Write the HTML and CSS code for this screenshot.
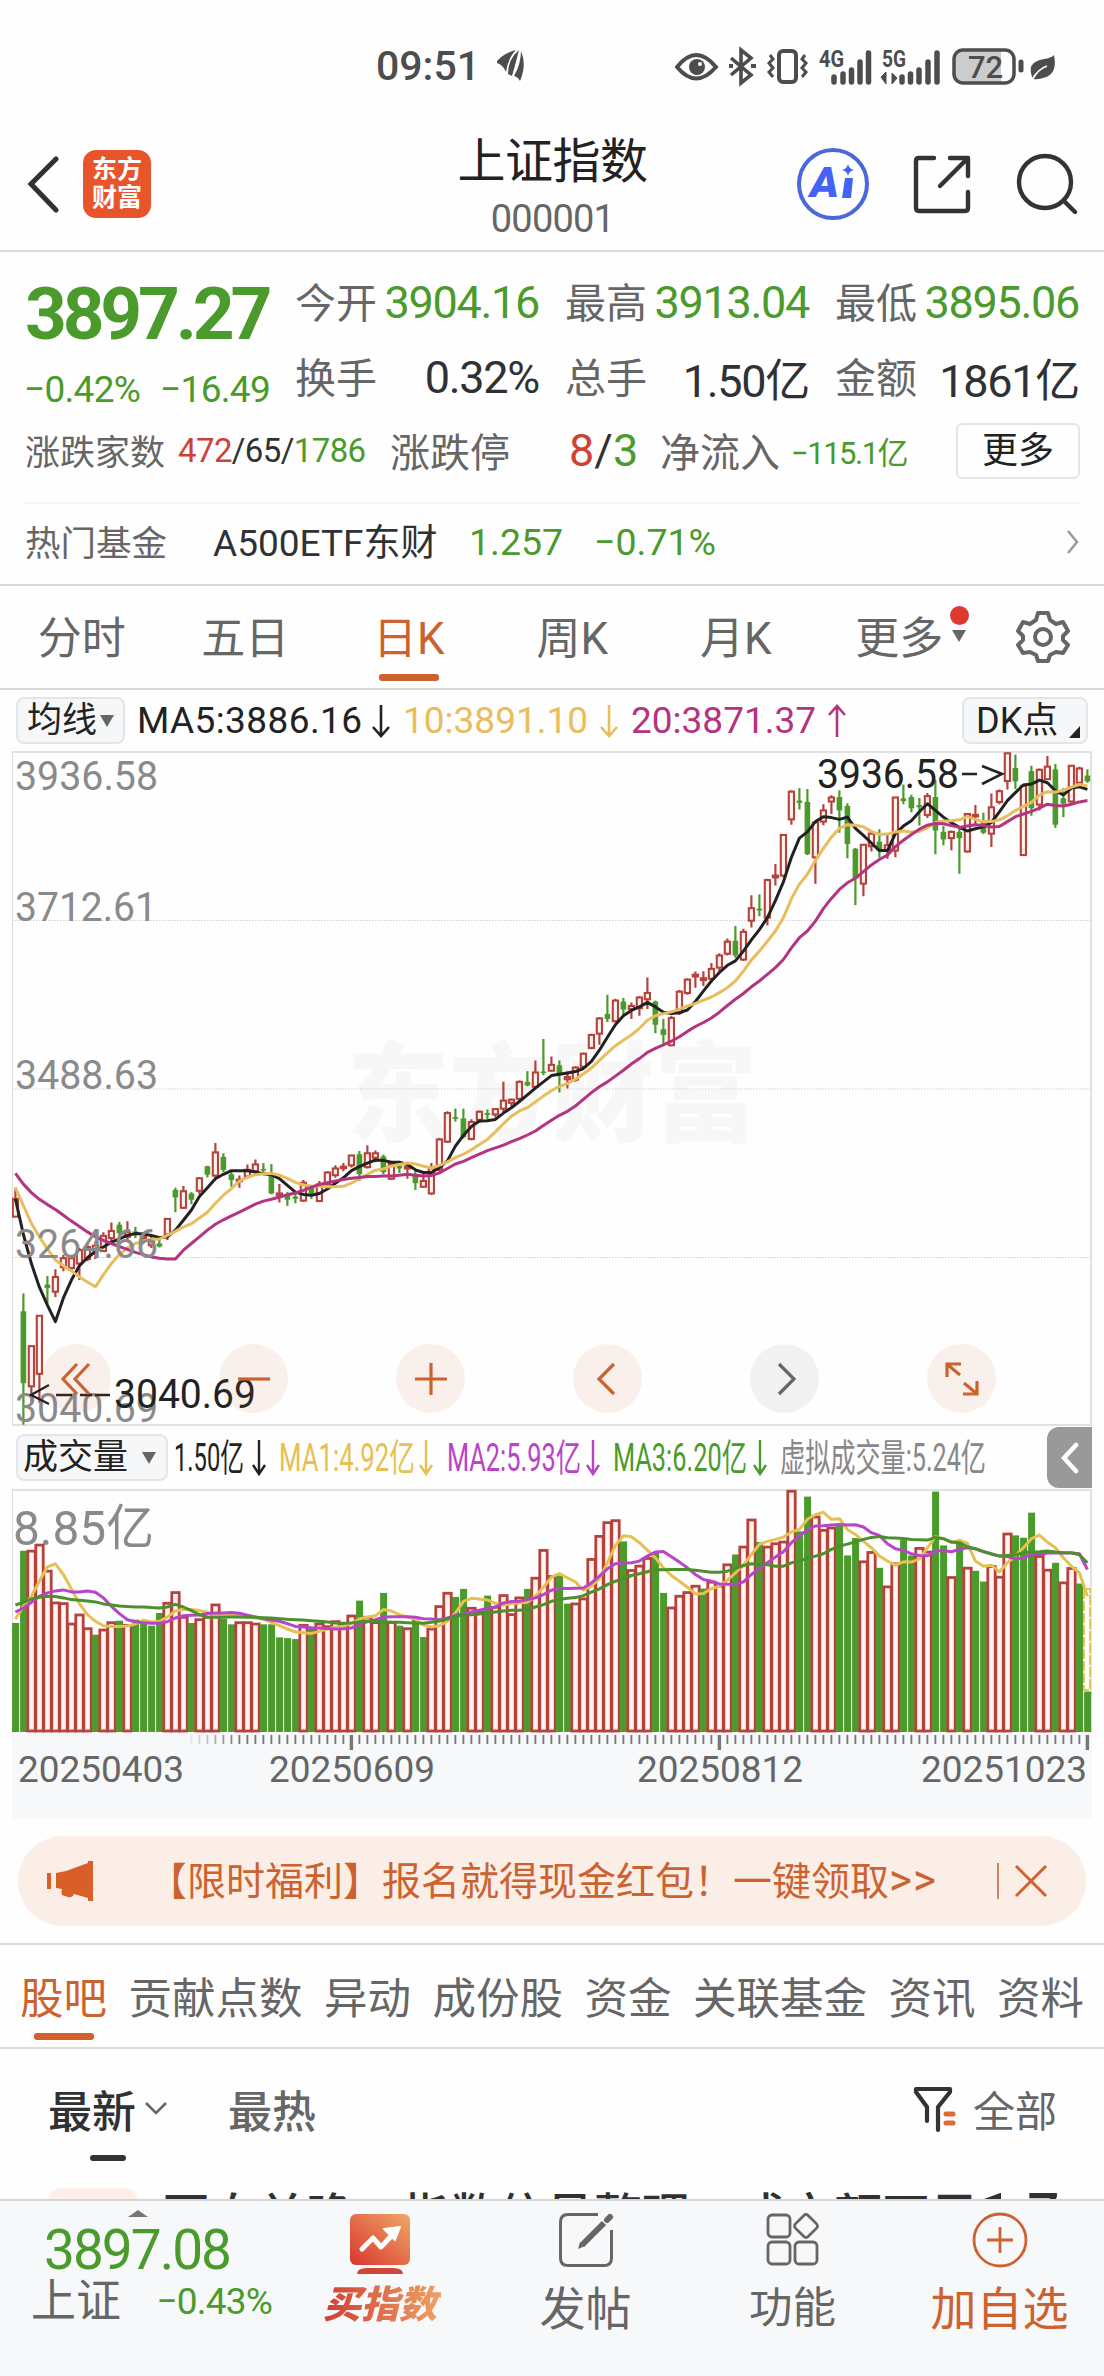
FILE: index.html
```html
<!DOCTYPE html>
<html lang="zh-CN">
<head>
    <meta charset="UTF-8">
    <meta name="viewport" content="width=device-width, initial-scale=1.0">
    <title>上证指数 000001</title>
    <link rel="stylesheet" href="styles.css">
</head>
<body>
<div class="phone">
    <div class="status-bar">
        <span class="clock">09:51</span>
        <svg class="signal-leaf" width="30" height="34" viewBox="0 0 30 34" fill="#4d4d4d">
            <path d="M1 12Q8 4 20 1Q12 9 10 23Q7 16 1 14Z"/>
            <path d="M12 25Q12 10 23 1Q20 13 16 27Z"/>
            <path d="M25 2Q31 16 24 32Q22 28 18 27Q25 15 25 2Z"/>
        </svg>
        <svg class="status-icons" width="390" height="44" viewBox="0 0 390 44" fill="none" stroke="#4d4d4d">
            <path d="M2 23Q21-1 41 23Q21 46 2 23Z" stroke-width="4"/>
            <circle cx="22" cy="23" r="8" fill="#4d4d4d" stroke="none"/>
            <circle cx="25" cy="20" r="2" fill="#fff" stroke="none"/>
            <path d="M56 14L76 31L66 39V6L76 14L56 31" stroke-width="3.6"/>
            <path d="M54 22h4M76 22h5" stroke-width="4"/>
            <rect x="104" y="7" width="17" height="31" rx="4" stroke-width="4"/>
            <path d="M95 11l3 4-4 4 4 5-4 4 4 5M130 11l-3 4 4 4-4 5 4 4-4 5" stroke-width="3"/>
            <text class="net" x="144" y="23" textLength="25" lengthAdjust="spacingAndGlyphs">4G</text>
            <path d="M159 38v-5M168 38v-8M176.500 38V26M185 38V18M193.500 38V9" stroke-width="5.500" stroke-linecap="round"/>
            <text class="net" x="207" y="23" textLength="24" lengthAdjust="spacingAndGlyphs">5G</text>
            <path d="M227 38v-5M235.500 38v-8M244 38V26M253 38V18M262 38V9" stroke-width="5.500" stroke-linecap="round"/>
            <path d="M206 33L211 28V40ZM217 29V40L222 34Z" fill="#4d4d4d" stroke-width="1"/>
            <path d="M287 7h39v31h-39q-7 0-7-7V14q0-7 7-7z" fill="#ccc" stroke="none"/>
            <rect x="279" y="6" width="60" height="33" rx="9" stroke-width="3.500"/>
            <path d="M346 18v8" stroke-width="5" stroke-linecap="round"/>
            <text class="battery" x="293" y="34">72</text>
            <path d="M358 35Q350 18 369 15Q376 14 379 11Q383 31 368 34Q362 36 358 35Z" fill="#4d4d4d" stroke="none"/>
            <path d="M357 36Q363 25 372 22" stroke="#fff" stroke-width="1.800"/>
        </svg>
    </div>

    <header class="header">
        <div class="header-left">
            <svg width="34" height="58" viewBox="0 0 34 58" fill="none" stroke="#2f3133" stroke-width="5" stroke-linecap="round"><path d="M30 4L5 29L30 55"/></svg>
            <div class="logo">东方<br>财富</div>
        </div>
        <div class="header-title">
            <h1>上证指数</h1>
            <p>000001</p>
        </div>
        <div class="header-right">
            <svg width="72" height="72" viewBox="0 0 72 72">
                <circle cx="36" cy="36" r="34" fill="none" stroke="#4a68dd" stroke-width="4"/>
                <text class="ai-text" x="13" y="49" textLength="29" lengthAdjust="spacingAndGlyphs">A</text>
                <path d="M48 30h8l-2 20h-9z" fill="#4263f5"/>
                <path d="M51 16q1 5 6 6q-5 1-6 6q-1-5-6-6q5-1 6-6z" fill="#4263f5"/>
            </svg>
            <svg width="60" height="60" viewBox="0 0 60 60" fill="none" stroke="#333" stroke-width="4.400" stroke-linecap="round" stroke-linejoin="round">
                <path d="M22 4H7Q4 4 4 7V54Q4 57 7 57H53Q56 57 56 54V38M38 4H56V22M55 5L28 32"/>
            </svg>
            <svg width="62" height="62" viewBox="0 0 62 62" fill="none" stroke="#333" stroke-width="4.400" stroke-linecap="round">
                <circle cx="29" cy="29" r="26"/><path d="M48 48l11 11"/>
            </svg>
        </div>
    </header>

    <section class="quote">
        <div class="quote-top">
            <div class="price-box">
                <div class="price">3897.27</div>
                <div class="change"><span>−0.42%</span><span>−16.49</span></div>
            </div>
            <div class="stats">
                <div><label>今开</label><b class="down">3904.16</b></div>
                <div><label>最高</label><b class="down">3913.04</b></div>
                <div><label>最低</label><b class="down">3895.06</b></div>
                <div><label>换手</label><b>0.32%</b></div>
                <div><label>总手</label><b>1.50亿</b></div>
                <div><label>金额</label><b>1861亿</b></div>
            </div>
        </div>
        <div class="breadth">
            <label class="small">涨跌家数</label>
            <span class="counts"><i class="up">472</i>/65/<i class="down">1786</i></span>
            <label>涨跌停</label>
            <span class="limits"><i class="up">8</i>/<i class="down">3</i></span>
            <label>净流入</label>
            <span class="inflow down">−115.1亿</span>
            <button class="more">更多</button>
        </div>
        <div class="fund">
            <label>热门基金</label>
            <span class="fund-name">A500ETF东财</span>
            <span class="down fund-price">1.257</span>
            <span class="down fund-pct">−0.71%</span>
            <svg width="14" height="26" viewBox="0 0 14 26" fill="none" stroke="#999" stroke-width="2.500"><path d="M2 2l9 11l-9 11"/></svg>
        </div>
    </section>

    <nav class="period">
        <span>分时</span>
        <span>五日</span>
        <span class="active">日K</span>
        <span>周K</span>
        <span>月K</span>
        <span>更多<i class="red-dot"></i><i class="caret"></i></span>
        <svg width="56" height="56" viewBox="0 0 56 56" fill="none" stroke="#666" stroke-width="4" stroke-linejoin="round">
            <path d="M23 4h10l2 7l6 4l7-2l5 9l-5 5v4l5 5l-5 8l-7-1l-6 3l-2 6h-10l-2-6l-6-3l-7 1l-5-8l5-5v-4l-5-5l5-9l7 2l6-4z"/>
            <circle cx="28" cy="28" r="8"/>
        </svg>
    </nav>

    <div class="indicator">
        <div class="pick">均线<i class="caret"></i></div>
        <span class="ma5">MA5:3886.16</span>
        <svg class="arrow" width="20" height="34" viewBox="0 0 20 34" fill="none" stroke="#222" stroke-width="2.600"><path d="M10 1V32M2 23L10 32L18 23"/></svg>
        <span class="ma10">10:3891.10</span>
        <svg class="arrow" width="20" height="34" viewBox="0 0 20 34" fill="none" stroke="#e8bd5e" stroke-width="2.600"><path d="M10 1V32M2 23L10 32L18 23"/></svg>
        <span class="ma20">20:3871.37</span>
        <svg class="arrow" width="20" height="34" viewBox="0 0 20 34" fill="none" stroke="#b4347f" stroke-width="2.600"><path d="M10 33V2M2 11L10 2L18 11"/></svg>
        <div class="pick dk">DK点</div>
    </div>

    <div class="chart-box">
        <svg id="kline" width="1080" height="675" viewBox="0 0 1080 675"></svg>
        <div class="tools">
            <button><svg width="34" height="34" viewBox="0 0 34 34"><path d="M17 2L3 17L17 32M29 2L15 17L29 32"/></svg></button>
            <button><svg width="34" height="34" viewBox="0 0 34 34"><path d="M1 17H33"/></svg></button>
            <button><svg width="34" height="34" viewBox="0 0 34 34"><path d="M1 17H33M17 1V33"/></svg></button>
            <button><svg width="34" height="34" viewBox="0 0 34 34"><path d="M23 2L8 17L23 32"/></svg></button>
            <button class="gray"><svg width="34" height="34" viewBox="0 0 34 34"><path d="M11 2L26 17L11 32"/></svg></button>
            <button><svg width="34" height="34" viewBox="0 0 34 34"><path d="M2 15V2H16M3 3L15 13M32 19V32H18M31 31L19 21"/></svg></button>
        </div>
    </div>

    <div class="vol-head">
        <div class="pick vol-pick">成交量<i class="caret"></i></div>
        <svg class="readout" width="820" height="60" viewBox="0 0 820 60">
            <text x="0" y="43" textLength="70" lengthAdjust="spacingAndGlyphs" fill="#222">1.50亿</text>
            <text x="105" y="43" textLength="136" lengthAdjust="spacingAndGlyphs" fill="#e6c050">MA1:4.92亿</text>
            <text x="273" y="43" textLength="134" lengthAdjust="spacingAndGlyphs" fill="#b844c8">MA2:5.93亿</text>
            <text x="439" y="43" textLength="134" lengthAdjust="spacingAndGlyphs" fill="#4a9a2c">MA3:6.20亿</text>
            <text x="606" y="43" textLength="206" lengthAdjust="spacingAndGlyphs" fill="#888">虚拟成交量:5.24亿</text>
            <path d="M85 12V46M79 37L85 46L91 37" stroke="#222"/>
            <path d="M252 12V46M246 37L252 46L258 37" stroke="#e6c050"/>
            <path d="M419 12V46M413 37L419 46L425 37" stroke="#b844c8"/>
            <path d="M586 12V46M580 37L586 46L592 37" stroke="#4a9a2c"/>
        </svg>
        <button class="collapse"><svg width="20" height="32" viewBox="0 0 20 32" fill="none" stroke="#fff" stroke-width="4.500" stroke-linecap="round"><path d="M16 3L4 16L16 29"/></svg></button>
    </div>
    <div class="vol-box">
        <svg id="volume" width="1080" height="245" viewBox="0 0 1080 245"></svg>
    </div>
    <div class="axis">
        <svg id="axis" width="1080" height="85" viewBox="0 0 1080 85"></svg>
    </div>

    <div class="banner">
        <svg width="48" height="40" viewBox="0 0 48 40" fill="#d95f28">
            <rect x="1" y="12" width="4" height="16"/>
            <path d="M10 12L20 10L42 2V0H47V40H42V37L28 33Q26 37 22 36L16 34Q15 30 16 28L10 27Z"/>
        </svg>
        <p>【限时福利】报名就得现金红包！一键领取<span>&gt;&gt;</span></p>
        <i class="bar"></i>
        <svg width="34" height="34" viewBox="0 0 34 34" fill="none" stroke="#d0622f" stroke-width="3"><path d="M2 2L32 32M32 2L2 32"/></svg>
    </div>

    <nav class="topics">
        <span class="active">股吧</span>
        <span>贡献点数</span>
        <span>异动</span>
        <span>成份股</span>
        <span>资金</span>
        <span>关联基金</span>
        <span>资讯</span>
        <span>资料</span>
    </nav>

    <section class="posts">
        <div class="sort">
            <span class="newest">最新</span>
            <svg class="sort-caret" width="24" height="16" viewBox="0 0 24 16" fill="none" stroke="#666" stroke-width="2.600"><path d="M2 2L12 12L22 2"/></svg>
            <span class="hottest">最热</span>
            <svg class="filter" width="46" height="48" viewBox="0 0 46 48" fill="none" stroke="#333" stroke-width="4.200" stroke-linejoin="round" stroke-linecap="round">
                <path d="M14 36V22L3 7V4H37V7L25 22V45"/>
                <path d="M33 29h7M33 38h7" stroke="#df6a35" stroke-width="5"/>
            </svg>
            <span class="all">全部</span>
        </div>
        <div class="post">
            <div class="avatar"></div>
            <p>再自关晚，指数信号整理，成交额不足<span>1.7</span></p>
        </div>
    </section>

    <footer class="bottom-bar">
        <div class="mini">
            <i class="up-caret"></i>
            <div class="mini-price">3897.08</div>
            <div class="mini-row"><span>上证</span><em>−0.43%</em></div>
        </div>
        <div class="item buy">
            <svg width="62" height="62" viewBox="0 0 62 62">
                <defs><linearGradient id="hot" x1="0" y1="1" x2="1" y2="0"><stop offset="0" stop-color="#d8372e"/><stop offset="1" stop-color="#efa766"/></linearGradient></defs>
                <rect x="1" y="1" width="60" height="51" rx="6" fill="url(#hot)"/>
                <path d="M8 61Q8 55 18 55H44Q54 55 54 61Z" fill="#d2463a"/>
                <path d="M13 36L24 25L32 34L46 19" fill="none" stroke="#fff" stroke-width="5" stroke-linejoin="round" stroke-linecap="round"/>
                <path d="M35 16L51 14L46 27Z" fill="#fff" stroke="#fff" stroke-width="2" stroke-linejoin="round"/>
            </svg>
            <span>买指数</span>
        </div>
        <div class="item">
            <svg width="56" height="56" viewBox="0 0 56 56" fill="none" stroke="#666" stroke-width="3">
                <path d="M40 2.500H10Q2.500 2.500 2.500 10V46Q2.500 53.500 10 53.500H46Q53.500 53.500 53.500 46V18"/>
                <path d="M46 11L24 33" stroke-width="6"/>
                <path d="M20 37l2-7l5 4z" fill="#666" stroke="none"/>
                <path d="M49 8L52 5" stroke-width="6" stroke-linecap="round"/>
            </svg>
            <span>发帖</span>
        </div>
        <div class="item func">
            <svg width="56" height="56" viewBox="0 0 56 56" fill="none" stroke="#666" stroke-width="2.800">
                <rect x="3" y="3" width="22" height="22" rx="4"/>
                <rect x="3" y="30" width="22" height="22" rx="4"/>
                <rect x="30" y="30" width="22" height="22" rx="4"/>
                <rect x="32" y="5" width="18" height="18" rx="3" transform="rotate(45 41 14)"/>
            </svg>
            <span>功能</span>
        </div>
        <div class="item add">
            <svg width="56" height="56" viewBox="0 0 56 56" fill="none" stroke="#cc622f" stroke-width="2.800"><circle cx="28" cy="28" r="26"/><path d="M15 28H41M28 15V41"/></svg>
            <span>加自选</span>
        </div>
    </footer>
</div>
<script src="chart.js"></script>
</body>
</html>
```
FILE: styles.css
```css
* {
    box-sizing: border-box;
    margin: 0;
    padding: 0;
}
body {
    width: 1104px;
    height: 2376px;
    overflow: hidden;
    background: #fefefe;
    color: #303133;
    font-family: Roboto, "Noto Sans CJK SC", sans-serif;
}
i, em { font-style: normal; }
b { font-weight: 400; }
button {
    border: none;
    background: none;
    font-family: inherit;
}
svg { display: block; flex: none; }
.phone {
    display: flex;
    flex-direction: column;
    height: 2376px;
    overflow: hidden;
}
.up { color: #cf4038; }
.down { color: #4a9a2c; }
label { color: #666; }

/* status bar */
.status-bar {
    height: 132px;
    padding: 0 39px 0 376px;
    display: flex;
    align-items: center;
    color: #4d4d4d;
}
.clock {
    font-size: 41px;
    font-weight: 500;
    width: 120px;
}
.status-icons { margin-left: auto; }
.net {
    font-size: 23px;
    font-weight: 700;
    fill: #4d4d4d;
    stroke: none;
}
.battery {
    font-size: 31px;
    font-weight: 500;
    fill: #4d4d4d;
    stroke: none;
}

/* header */
.header {
    height: 120px;
    border-bottom: 2px solid #d9d9d9;
    display: flex;
    justify-content: space-between;
    padding: 0 26px 0 26px;
}
.header-left {
    display: flex;
    align-items: center;
    gap: 23px;
    width: 282px;
    padding-bottom: 14px;
}
.logo {
    width: 68px;
    height: 68px;
    border-radius: 13px;
    background: #e9552b;
    color: #fff;
    font-size: 25px;
    font-weight: 700;
    line-height: 28px;
    text-align: center;
    padding-top: 6px;
}
.header-title { text-align: center; }
.header-title h1 {
    font-size: 48px;
    font-weight: 400;
    line-height: 56px;
    padding-top: 2px;
    color: #222;
    letter-spacing: -0.5px;
}
.header-title p {
    font-size: 38px;
    line-height: 58px;
    color: #666;
    letter-spacing: -0.8px;
}
.header-right {
    display: flex;
    align-items: center;
    justify-content: space-between;
    width: 281px;
    padding-bottom: 14px;
}
.ai-text {
    font-size: 43px;
    font-weight: 900;
    font-style: italic;
    fill: #4263f5;
}

/* quote */
.quote {
    height: 334px;
    padding: 0 24px 0 25px;
    border-bottom: 2px solid #d9d9d9;
}
.quote-top {
    display: flex;
    height: 164px;
}
.price-box { width: 270px; }
.price {
    font-size: 73px;
    font-weight: 700;
    color: #4a9a2c;
    letter-spacing: -4.200px;
    line-height: 80px;
    padding-top: 22px;
}
.change {
    display: flex;
    width: 246px;
    justify-content: space-between;
    color: #4a9a2c;
    font-size: 37px;
    line-height: 50px;
    letter-spacing: -0.7px;
    padding-top: 11px;
    margin-left: -1px;
}
.stats {
    display: grid;
    grid-template-columns: 243px 243px 243px;
    column-gap: 27px;
    grid-auto-rows: 75px;
    padding-top: 13px;
}
.stats div {
    display: flex;
    justify-content: space-between;
    align-items: center;
}
.stats label { font-size: 41px; padding-bottom: 5px; }
.stats b {
    font-size: 45px;
    letter-spacing: -1.3px;
    margin-right: -1px;
}
.breadth {
    display: flex;
    align-items: center;
    height: 70px;
    font-size: 40px;
}
.breadth label { padding-bottom: 2px; }
.breadth label.small { font-size: 35px; width: 153px; }
.counts {
    font-size: 33px;
    letter-spacing: -0.6px;
    width: 212px;
}
.limits {
    font-size: 45px;
    width: 150px;
    padding-left: 59px;
}
.inflow {
    font-size: 31px;
    width: 165px;
    padding-left: 11px;
    letter-spacing: -1.5px;
}
.more {
    width: 124px;
    height: 56px;
    margin-left: auto;
    border: 2px solid #e3e5e8;
    border-radius: 6px;
    font-size: 36px;
    line-height: 48px;
    color: #222;
}
.fund {
    display: flex;
    align-items: center;
    height: 83px;
    margin-top: 16px;
    padding-bottom: 5px;
    border-top: 2px solid #f4f5f6;
    font-size: 35.500px;
}
.fund label { width: 188px; padding-bottom: 3px; }
.fund-name { width: 256px; font-size: 37px; padding-bottom: 3px; }
.fund-price { width: 125px; font-size: 37.500px; }
.fund-pct { font-size: 37.500px; }
.fund svg { margin-left: auto; }

/* period tabs */
.period {
    height: 105px;
    display: flex;
    align-items: center;
    border-bottom: 2px solid #d9d9d9;
    font-size: 44px;
    color: #666;
}
.period span {
    position: relative;
    width: 163.500px;
    padding-bottom: 3px;
    text-align: center;
}
.period svg { margin-left: 34px; }
.period .active { color: #cc622f; }
.period .active::after {
    content: "";
    position: absolute;
    left: 52px;
    bottom: -11px;
    width: 60px;
    height: 7px;
    border-radius: 3px;
    background: #cc622f;
}
.caret {
    display: inline-block;
    border: 7.500px solid transparent;
    border-top: 12px solid #666;
    border-bottom: none;
}
.period .caret {
    position: absolute;
    left: 134px;
    top: 27px;
}
.red-dot {
    position: absolute;
    left: 132px;
    top: 3px;
    width: 19px;
    height: 19px;
    border-radius: 50%;
    background: #dc3a31;
}

/* indicator line */
.indicator {
    height: 61px;
    padding: 0 16px;
    display: flex;
    align-items: center;
    font-size: 37px;
}
.pick {
    width: 109px;
    height: 47px;
    border: 2px solid #e3e6e9;
    border-radius: 8px;
    background: #f6f7f9;
    color: #222;
    font-size: 35px;
    line-height: 40px;
    display: flex;
    align-items: center;
    padding-left: 9px;
    gap: 3px;
    flex: none;
}
.ma5 { color: #222; width: 243px; padding-left: 12px; letter-spacing: 0.4px; }
.ma10 { color: #e8bd5e; width: 205px; padding-left: 12px; }
.ma20 { color: #b4347f; width: 205px; padding-left: 12px; }
.ma5, .ma10, .ma20 { flex: none; }
.arrow { margin-left: 3px; }
.dk {
    margin-left: auto;
    width: 126px;
    padding-left: 12px;
    font-size: 36px;
}
.dk::after {
    content: "";
    border-left: 11px solid transparent;
    border-bottom: 12px solid #222;
    margin: 22px 0 0 8px;
}

/* charts */
.chart-box {
    position: relative;
    height: 675px;
    padding-left: 12px;
}
.tools {
    position: absolute;
    left: 42px;
    top: 593px;
    display: flex;
    gap: 108px;
}
.tools button {
    width: 69px;
    height: 69px;
    border-radius: 50%;
    background: rgba(216, 98, 40, 0.09);
    display: flex;
    align-items: center;
    justify-content: center;
}
.tools svg {
    fill: none;
    stroke: #cc622f;
    stroke-width: 3.200;
}
.tools .gray { background: rgba(0, 0, 0, 0.05); }
.tools .gray svg { stroke: #666; }
.vol-head {
    display: flex;
    align-items: center;
    height: 63px;
    padding-left: 16px;
}
.vol-pick { width: 152px; padding-left: 5px; gap: 14px; }
.readout { margin-left: 6px; }
.readout text { font-size: 38px; }
.readout path { fill: none; stroke-width: 2.400; }
.collapse {
    margin-left: auto;
    margin-right: 12px;
    width: 45px;
    height: 61px;
    border-radius: 12px 0 0 12px;
    background: #999;
    display: flex;
    align-items: center;
    justify-content: center;
}
.vol-box, .axis { padding-left: 12px; }
.vol-box { height: 244px; }
.axis svg { background: #f7f8fa; }
.scale { font-size: 41px; fill: #8a8a8a; }
.scale.vol { font-size: 49px; }
.peak { font-size: 41px; fill: #222; }
.date { font-size: 37px; fill: #666; }
.watermark { font-size: 108px; font-weight: 900; fill: #f7f7f7; }

/* banner */
.banner {
    height: 90px;
    margin: 18px 18px 17px;
    border-radius: 45px;
    background: #faeee6;
    display: flex;
    align-items: center;
    padding: 0 38px 0 28px;
    color: #cc622f;
}
.banner p {
    font-size: 39px;
    width: 851px;
    padding-left: 54px;
    padding-bottom: 5px;
    white-space: nowrap;
}
.banner p span { font-size: 44px; line-height: 40px; letter-spacing: 1px; }
.banner .bar {
    width: 2px;
    height: 36px;
    margin: 0 15px 0 52px;
    background: #cc8660;
    flex: none;
}

/* topics */
.topics {
    height: 106px;
    padding-left: 20px;
    border-top: 2px solid #d9d9d9;
    border-bottom: 2px solid #d9d9d9;
    display: flex;
    align-items: center;
    gap: 21.500px;
    font-size: 43.500px;
    white-space: nowrap;
    color: #666;
}
.topics .active {
    position: relative;
    color: #cc622f;
}
.topics .active::after {
    content: "";
    position: absolute;
    left: 14px;
    bottom: -13px;
    width: 60px;
    height: 7px;
    border-radius: 3px;
    background: #d3602b;
}

/* posts */
.posts {
    height: 151px;
    overflow: hidden;
}
.sort {
    height: 122px;
    padding: 0 47px 2px 48px;
    display: flex;
    align-items: center;
    font-size: 44px;
    color: #666;
}
.newest {
    position: relative;
    color: #303133;
    font-weight: 500;
}
.newest::after {
    content: "";
    position: absolute;
    left: 42px;
    bottom: -20px;
    width: 36px;
    height: 6px;
    border-radius: 3px;
    background: #333;
}
.sort-caret { margin: 0 60px 0 8px; }
.hottest { font-weight: 500; }
.filter { margin: 0 14px 0 auto; }
.all { font-size: 42px; }
.post {
    display: flex;
    padding-left: 48px;
    margin-top: 17px;
}
.avatar {
    width: 90px;
    height: 90px;
    border-radius: 14px;
    background: #fdeee7;
    flex: none;
}
.post p {
    margin: -1px 0 0 24px;
    font-size: 48px;
    line-height: 60px;
    font-weight: 500;
    white-space: nowrap;
}
.post p span { font-size: 56px; line-height: 40px; padding-left: 2px; }

/* bottom bar */
.bottom-bar {
    height: 177px;
    border-top: 2px solid #d4d6d8;
    background: #f7f8fa;
    display: flex;
    color: #666;
}
.mini {
    position: relative;
    width: 277px;
    padding: 18px 0 0 31px;
}
.up-caret {
    position: absolute;
    left: 128px;
    top: 9px;
    border: 10px solid transparent;
    border-top: none;
    border-bottom: 7px solid #777;
}
.mini-price {
    color: #4a9a2c;
    font-size: 55px;
    line-height: 62px;
    letter-spacing: -2px;
    padding-left: 13px;
}
.mini-row {
    display: flex;
    align-items: center;
    justify-content: space-between;
    font-size: 45px;
    line-height: 41px;
    padding-right: 5px;
}
.mini-row em {
    font-size: 37px;
    color: #4a9a2c;
    letter-spacing: -0.8px;
}
.item {
    width: 207px;
    padding-top: 11px;
    display: flex;
    flex-direction: column;
    align-items: center;
    font-size: 46px;
}
.item span { line-height: 82px; }
.buy {
    width: 206px;
    padding-top: 12px;
    margin-right: -1px;
}
.buy span {
    font-size: 38px;
    font-weight: 900;
    font-style: italic;
    line-height: 61px;
    padding: 0 4px;
    background: linear-gradient(90deg, #d03a32, #eda263);
    -webkit-background-clip: text;
    background-clip: text;
    color: transparent;
}
.func { font-size: 43.500px; }
.add { color: #cc622f; }
```
FILE: chart.js
```js
const STEP = 8;
const RED = "#b5433c";
const GREEN = "#4a9a2c";
const cx = i => 3.4 + i * STEP;

// high, body top, body bottom, low (chart units), sign: 1 rise, 0 fall
const candles = [
    [1005,1030,1070,1070,1],[1242,1282,1443,1536,0],[1360,1360,1450,1490,1],[1292,1292,1422,1487,1],[1203,1222,1230,1265,0],
    [1188,1205,1238,1250,1],[1155,1163,1183,1192,1],[1155,1163,1185,1192,1],[1140,1145,1175,1212,1],[1130,1138,1165,1170,1],
    [1125,1135,1145,1165,1],[1105,1113,1147,1148,1],[1083,1102,1118,1130,1],[1082,1088,1107,1113,0],[1080,1105,1115,1125,1],
    [1093,1103,1107,1118,0],[1105,1115,1120,1130,1],[1115,1122,1134,1140,1],[1120,1130,1137,1139,0],[1073,1075,1110,1122,1],
    [1005,1010,1027,1060,0],[1001,1013,1050,1053,1],[1015,1018,1032,1042,0],[981,984,1012,1020,1],[956,957,976,982,0],
    [905,926,978,985,1],[928,936,965,970,0],[970,975,988,1003,0],[978,987,990,1005,1],[953,965,980,985,1],
    [942,953,968,975,1],[950,963,966,972,0],[952,972,1018,1020,0],[997,1018,1021,1038,1],[1015,1022,1032,1046,0],
    [1012,1025,1030,1040,0],[988,994,1034,1037,1],[1000,1003,1018,1030,0],[990,998,1035,1036,1],[968,971,998,1000,1],
    [955,962,977,983,1],[950,958,961,968,1],[931,933,955,960,1],[923,930,975,990,0],[910,928,959,962,1],
    [922,928,938,948,1],[931,935,970,975,0],[948,952,985,988,1],[945,955,962,972,0],[950,958,962,985,1],
    [965,978,995,1010,0],[975,990,1003,1005,1],[950,962,1018,1021,1],[893,897,965,968,1],[834,838,902,905,1],
    [828,847,851,857,0],[828,850,892,895,0],[852,858,896,899,1],[832,835,853,860,1],[830,838,842,852,0],
    [827,829,841,848,1],[768,810,828,835,1],[805,808,815,822,1],[765,768,806,812,1],[744,768,776,778,0],
    [720,747,779,782,1],[672,745,748,753,0],[711,730,743,745,1],[720,731,753,792,0],[745,757,762,783,1],
    [733,736,763,768,1],[703,705,734,738,1],[660,663,692,695,1],[623,626,660,685,1],[573,616,627,634,0],
    [582,586,632,635,1],[580,588,606,620,0],[590,598,605,627,1],[576,579,603,620,1],[534,569,583,605,1],
    [586,588,640,659,0],[627,650,663,683,0],[620,625,686,688,1],[562,566,613,618,1],[536,539,569,573,1],
    [521,528,532,557,1],[520,536,540,553,1],[502,515,537,545,1],[480,485,512,520,1],[447,454,481,485,1],
    [419,452,485,490,0],[425,432,494,497,1],[350,379,407,422,1],[348,380,384,397,0],[313,316,400,418,1],
    [280,306,310,328,1],[213,215,306,310,1],[115,118,180,192,1],[110,138,143,158,0],[112,141,258,260,0],
    [185,187,265,324,1],[146,160,185,193,1],[126,131,140,168,1],[115,130,160,210,0],[144,150,235,267,0],
    [244,246,312,372,0],[235,237,324,352,1],[208,212,240,252,1],[202,230,250,266,0],[215,238,250,268,1],
    [130,131,250,265,1],[102,133,139,146,0],[125,130,155,164,0],[132,148,153,194,0],[121,128,170,177,1],
    [92,130,205,258,0],[195,208,225,238,0],[205,208,222,249,1],[195,208,222,302,0],[167,168,252,254,1],
    [148,170,173,195,1],[165,185,210,213,0],[122,153,212,242,1],[113,117,141,146,1],[31,32,94,113,1],
    [35,65,95,112,0],[100,105,260,262,1],[60,72,155,172,0],[66,69,147,160,1],[38,62,90,92,1],
    [56,68,192,199,0],[110,133,145,175,0],[58,60,140,143,1],[62,66,98,102,1],[68,82,95,98,0]
];

const ma5 = [1030,1110,1175,1228,1268,1305,1252,1212,1180,1162,1148,1138,1127,1120,1112,1108,1109,1112,1117,1115,1100,1078,1055,1025,1005,985,975,967,967,967,970,974,976,985,1000,1015,1020,1022,1018,1008,995,983,967,958,950,943,944,948,948,953,965,971,971,960,945,912,888,868,856,855,852,838,826,812,797,782,768,754,751,748,745,738,722,697,668,640,620,608,600,590,600,612,615,613,607,588,565,542,523,507,497,475,450,427,400,362,320,265,222,208,185,174,176,180,175,200,216,233,250,250,212,195,183,163,145,160,175,188,198,206,201,197,187,163,138,120,103,101,92,98,116,125,110,107,113];
const ma10 = [1005,1045,1085,1115,1142,1167,1180,1192,1205,1216,1227,1200,1175,1155,1140,1130,1124,1121,1120,1112,1103,1093,1086,1073,1060,1040,1022,1007,990,982,976,974,973,977,984,993,999,1001,1002,1003,1003,1002,995,985,975,966,963,957,953,950,952,957,961,955,947,938,930,920,908,897,880,862,845,833,826,813,800,788,778,772,762,750,737,720,703,687,675,663,648,630,620,615,611,605,598,592,585,578,568,557,542,520,495,475,453,430,400,358,325,303,272,245,220,200,192,193,197,207,214,213,208,206,208,207,199,187,184,183,181,174,180,185,185,181,172,160,151,142,126,118,119,115,108,102,105];
const ma20 = [973,997,1016,1031,1043,1054,1067,1080,1092,1104,1115,1123,1130,1137,1143,1150,1155,1160,1163,1165,1165,1145,1130,1115,1100,1087,1077,1068,1060,1051,1042,1035,1031,1026,1021,1017,1011,1004,998,994,990,987,984,982,980,980,979,979,977,975,977,979,978,972,962,952,946,938,930,922,916,910,902,895,887,878,866,854,843,834,822,807,792,779,768,755,742,728,716,702,693,685,677,667,655,644,635,625,612,597,583,570,555,542,527,512,494,468,445,430,408,380,357,337,322,312,297,282,270,260,241,227,214,202,193,189,190,194,198,195,192,194,197,196,185,174,168,162,155,146,149,150,146,141,138];

// top of every volume bar, negative = falling day
const volumes = [-610,-394,392,374,452,547,549,610,583,624,-645,628,606,-603,614,-600,-603,-618,-580,548,516,590,-610,597,590,553,-598,-614,606,606,610,-614,-614,-653,-655,-658,614,-625,610,618,603,610,586,-543,590,606,-520,605,-618,624,-598,-652,625,558,518,-532,-508,563,575,-528,560,525,582,532,-508,473,390,468,-468,-552,550,535,417,348,307,301,-366,450,437,414,-398,-520,562,527,516,497,-507,485,497,433,-405,380,299,-368,380,370,365,213,-336,-232,290,330,323,-316,-408,-356,424,396,-445,499,430,-362,-408,384,395,-217,-378,471,-362,443,-454,-486,438,470,341,-348,-355,-280,408,449,-430,487,444,-492,-815];
const vma1 = [598,560,530,485,442,433,465,508,552,585,605,618,620,620,619,613,602,607,605,592,574,570,570,573,578,588,588,586,586,590,594,598,608,618,628,637,639,641,635,628,622,620,610,598,592,588,570,574,585,592,598,616,622,618,605,580,545,536,538,541,551,557,552,550,548,530,503,473,462,475,487,512,500,478,430,378,349,352,370,392,415,445,468,485,503,523,522,507,500,482,460,437,405,375,366,360,353,338,330,300,286,279,300,298,330,345,365,385,410,425,437,427,428,418,385,352,358,370,362,372,425,440,437,457,430,410,385,358,347,368,385,415,440,460,530];
const vma2 = [577,565,548,530,520,514,511,517,517,514,518,535,560,582,600,606,609,611,611,606,595,588,587,586,582,580,580,579,581,587,592,597,601,605,612,620,622,624,625,626,628,627,625,615,606,600,593,591,591,591,593,597,598,600,595,587,583,577,572,566,562,550,546,545,540,535,525,512,506,507,506,505,490,470,448,433,431,430,425,410,398,396,412,428,445,465,480,485,493,494,495,487,465,447,430,413,397,370,350,332,320,319,317,315,317,316,323,340,348,373,388,393,403,408,409,395,393,397,390,385,388,397,404,410,411,418,416,404,405,401,400,401,401,403,450];
const vma3 = [556,548,538,533,530,531,535,540,542,544,547,553,556,559,561,562,562,564,565,562,554,562,573,585,592,593,593,592,592,593,593,594,595,597,599,600,601,603,605,607,610,611,610,607,604,605,606,608,608,609,610,611,608,604,598,590,587,585,583,580,577,574,572,572,570,562,555,545,540,536,534,528,518,508,495,485,478,468,463,457,450,451,450,450,450,452,455,458,458,455,447,438,433,435,436,440,440,430,425,416,410,403,390,380,374,367,360,354,351,355,356,357,360,361,362,354,358,368,370,382,388,396,403,410,408,407,400,398,397,395,398,400,400,406,430];

function line(values, toY, color) {
    const pts = values.map((v, i) => `${cx(i)},${toY(v).toFixed(1)}`).join(" ");
    return `<polyline points="${pts}" fill="none" stroke="${color}" stroke-width="3" stroke-linejoin="round"/>`;
}

function label(cls, x, y, len, text) {
    return `<text class="${cls}" x="${x}" y="${y}" textLength="${len}" lengthAdjust="spacingAndGlyphs">${text}</text>`;
}

function drawKline() {
    const y = v => v / 2.24 - 12;
    let out = `<text class="watermark" x="335" y="382" textLength="410" lengthAdjust="spacingAndGlyphs">东方财富</text>`;
    [169.5, 338, 506.5].forEach(gy => {
        out += `<line x1="0" x2="1080" y1="${gy}" y2="${gy}" stroke="#d0d0d0" stroke-dasharray="1.5 1.5"/>`;
    });
    out += `<path d="M0 1H1079V674H0" fill="none" stroke="#e2e2e2" stroke-width="2"/><path d="M.5 0V674" stroke="#ddd"/>`;

    candles.forEach(([hi, top, bottom, lo, rise], i) => {
        const x = cx(i);
        const t = y(top), b = y(bottom), h = Math.max(b - t, 1.5);
        if (rise) {
            out += `<path d="M${x} ${y(hi)}V${t}M${x} ${b}V${y(lo)}" stroke="${RED}" stroke-width="2.2"/>`;
            out += `<rect x="${x - 2.6}" y="${t}" width="5.2" height="${h}" fill="#fff3f2" stroke="${RED}" stroke-width="2.1"/>`;
        } else {
            out += `<path d="M${x} ${y(hi)}V${y(lo)}" stroke="${GREEN}" stroke-width="2.2"/>`;
            out += `<rect x="${x - 2.8}" y="${t}" width="5.6" height="${h}" fill="${GREEN}"/>`;
        }
    });

    out += line(ma5, y, "#222") + line(ma10, y, "#e8bd5e") + line(ma20, y, "#b4347f");

    out += label("scale", 3, 39, 143, "3936.58");
    out += label("scale", 3, 170, 142, "3712.61");
    out += label("scale", 3, 338, 143, "3488.63");
    out += label("scale", 3, 507, 143, "3264.66");
    out += label("scale", 3, 671, 143, "3040.69");
    out += label("peak", 102, 657, 142, "3040.69");
    out += label("peak", 805, 37, 142, "3936.58");
    out += `<path d="M37 634L19 644L37 653M44 644H60M68 644H80M83 644H98" fill="none" stroke="#222" stroke-width="2.4"/>`;
    out += `<path d="M950 23H965M970 15L990 23L970 33" fill="none" stroke="#222" stroke-width="2.6"/>`;
    document.getElementById("kline").innerHTML = out;
}

function drawVolume() {
    const y = v => v / 2.99 - 70;
    const base = 243;
    let out = `<path d="M0 1H1079V244" fill="none" stroke="#e2e2e2" stroke-width="2"/><path d="M.5 0V244" stroke="#ddd"/>`;
    out += label("scale vol", 1, 56, 141, "8.85亿");
    volumes.forEach((v, i) => {
        const x = cx(i);
        const t = y(Math.abs(v));
        if (v > 0) {
            out += `<rect x="${x - 3.6}" y="${t + 1}" width="7.4" height="${base - t - 2}" fill="#fff5f3" stroke="${RED}" stroke-width="2.8"/>`;
        } else {
            out += `<rect x="${x - 3.3}" y="${t}" width="7" height="${base - t}" fill="${GREEN}"/>`;
        }
    });
    // estimated volume of the unfinished day
    out += `<rect x="1072" y="100" width="6" height="101" fill="none" stroke="#e6c65a" stroke-width="2" stroke-dasharray="10 2"/>`;
    out += line(vma1, y, "#e6c050") + line(vma2, y, "#b844c8") + line(vma3, y, "#4b902b");
    document.getElementById("volume").innerHTML = out;
}

function drawAxis() {
    let out = "";
    for (let i = 22; i < 135; i++) {
        const major = i === 42 || i === 88 || i === 134;
        const fade = Math.min(1, (i - 21) / 7);
        out += `<line x1="${cx(i)}" x2="${cx(i)}" y1="2" y2="${major ? 17 : 11}" stroke="#777" stroke-width="${major ? 3.4 : 1.8}" opacity="${fade}"/>`;
    }
    out += label("date", 6, 49, 166, "20250403");
    out += label("date", 257, 49, 166, "20250609");
    out += label("date", 625, 49, 166, "20250812");
    out += label("date", 909, 49, 166, "20251023");
    document.getElementById("axis").innerHTML = out;
}

drawKline();
drawVolume();
drawAxis();
```
